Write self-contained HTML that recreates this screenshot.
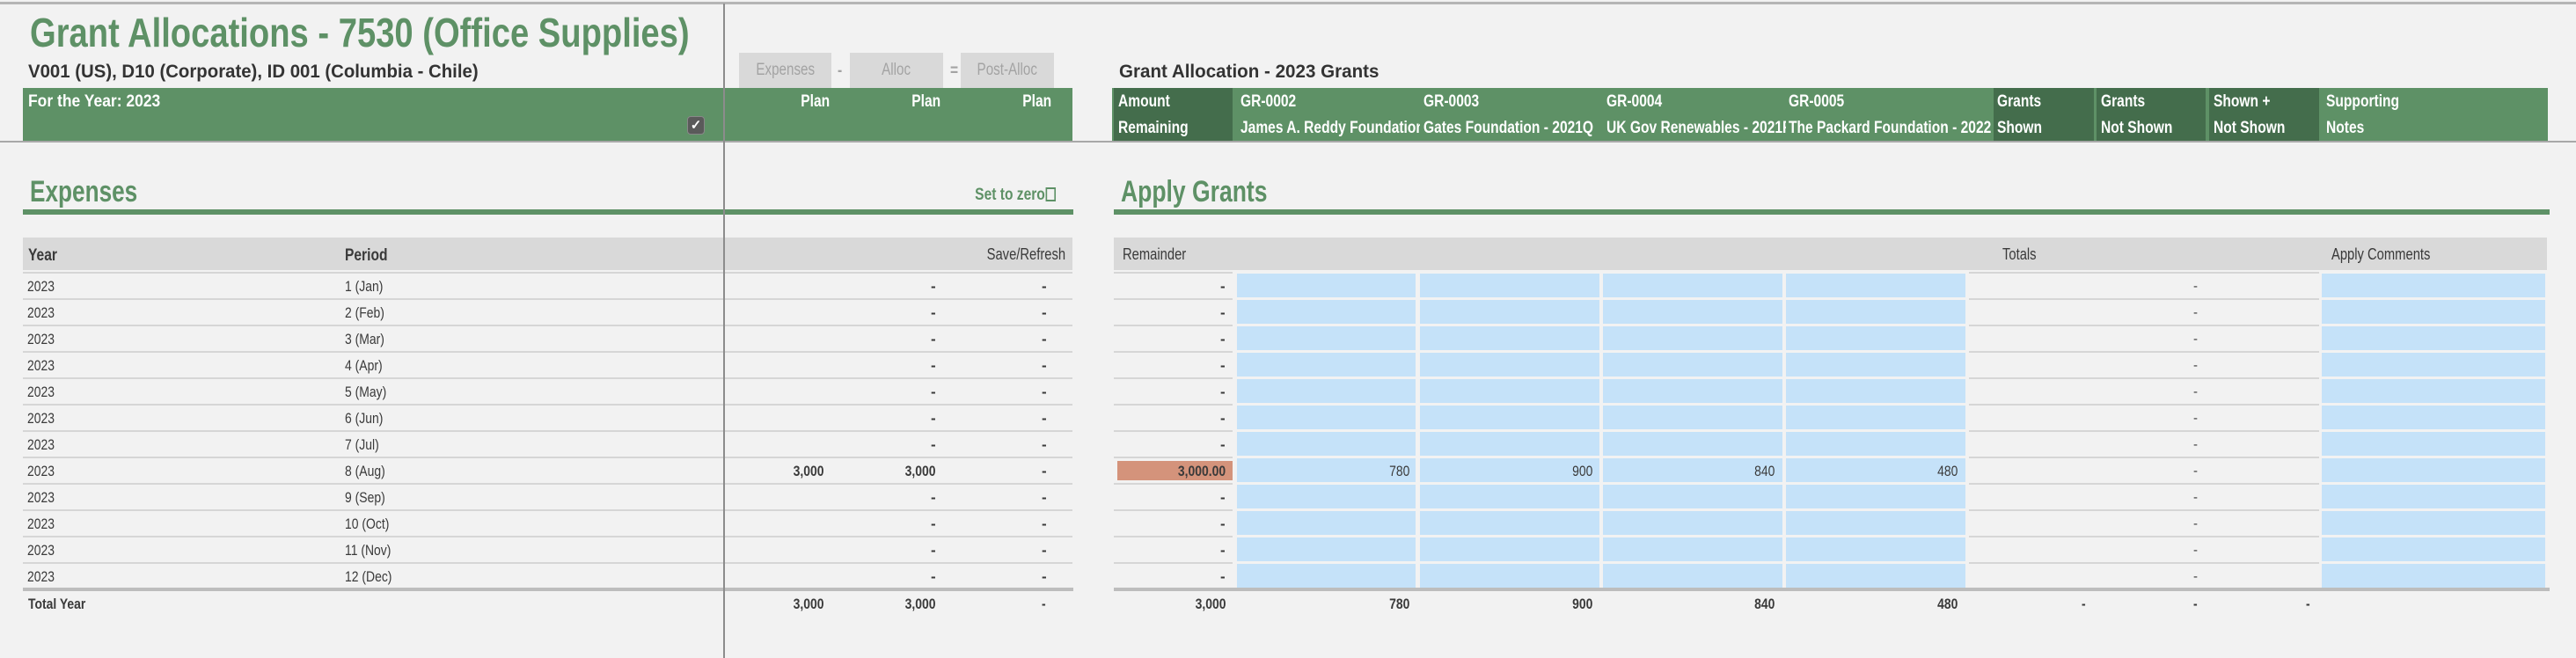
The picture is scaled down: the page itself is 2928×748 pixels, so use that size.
<!DOCTYPE html>
<html><head><meta charset="utf-8"><style>
*{margin:0;padding:0;box-sizing:border-box}
body{width:2928px;height:748px;background:#f2f2f2;position:relative;overflow:hidden;font-family:"Liberation Sans",sans-serif;color:#3a3a3a}
.a{position:absolute}
.t{position:absolute;white-space:nowrap;transform:scaleX(.82);transform-origin:left center}
.r{position:absolute;white-space:nowrap;transform:scaleX(.82);transform-origin:right center;text-align:right}
.row{position:absolute;height:30px;line-height:30px;font-size:17px}
.b{font-weight:bold}
.w{color:#fff;font-weight:bold;font-size:19px}
.sep{position:absolute;height:2px;background:#d6d6d6}
.btn{position:absolute;top:60px;height:40px;background:#d9d9d9;color:#a3a3a3;font-size:19px;line-height:40px;text-align:center}
</style></head><body>
<div class="a" style="left:0;top:2px;width:2928px;height:3px;background:#b5b5b5"></div>
<div class="a" style="left:822px;top:4px;width:2px;height:744px;background:#8c8c8c;z-index:5"></div>

<div class="t b" style="left:34px;top:10px;font-size:46px;line-height:54px;color:#5e9166;transform:scaleX(.83)">Grant Allocations - 7530 (Office Supplies)</div>
<div class="t b" style="left:32px;top:70px;font-size:21px;line-height:24px;color:#333;transform:scaleX(.97)">V001 (US), D10 (Corporate), ID 001 (Columbia - Chile)</div>
<div class="t b" style="left:1272px;top:70px;font-size:21px;line-height:24px;color:#333;transform:scaleX(.98)">Grant Allocation  - 2023 Grants</div>

<div class="btn" style="left:840px;width:105px"><span style="display:inline-block;transform:scaleX(.8)">Expenses</span></div>
<div class="btn" style="left:966px;width:106px"><span style="display:inline-block;transform:scaleX(.8)">Alloc</span></div>
<div class="btn" style="left:1092px;width:106px"><span style="display:inline-block;transform:scaleX(.8)">Post-Alloc</span></div>
<div class="t b" style="left:952px;top:70px;font-size:19px;color:#a3a3a3">-</div>
<div class="t b" style="left:1080px;top:70px;font-size:19px;color:#a3a3a3">=</div>

<div class="a" style="left:26px;top:100px;width:1193px;height:60px;background:#5e9166"></div>
<div class="t w" style="left:32px;top:104px;line-height:24px;transform:scaleX(.92)">For the Year: 2023</div>
<div class="a" style="left:781px;top:132px;width:20px;height:21px;background:#5a5a5a;border-radius:4px;border:1px solid #888;color:#fff;font-size:15px;line-height:19px;text-align:center;font-weight:bold">✓</div>
<div class="r w" style="right:1985px;top:104px;line-height:24px">Plan</div>
<div class="r w" style="right:1859px;top:104px;line-height:24px">Plan</div>
<div class="r w" style="right:1733px;top:104px;line-height:24px">Plan</div>

<div class="a" style="left:1264px;top:100px;width:1632px;height:60px;background:#5e9166"></div>
<div class="a" style="left:1266px;top:100px;width:135px;height:60px;background:#446d4c"></div>
<div class="a" style="left:2266px;top:100px;width:114px;height:60px;background:#446d4c"></div>
<div class="a" style="left:2383px;top:100px;width:124px;height:60px;background:#446d4c"></div>
<div class="a" style="left:2511px;top:100px;width:125px;height:60px;background:#446d4c"></div>
<div class="t w" style="left:1271px;top:104px;line-height:24px">Amount</div>
<div class="t w" style="left:1271px;top:134px;line-height:24px">Remaining</div>
<div class="t w" style="left:1410px;top:104px;line-height:24px">GR-0002</div>
<div class="t w" style="left:1618px;top:104px;line-height:24px">GR-0003</div>
<div class="t w" style="left:1826px;top:104px;line-height:24px">GR-0004</div>
<div class="t w" style="left:2033px;top:104px;line-height:24px">GR-0005</div>
<div class="a" style="left:1410px;top:134px;width:204px;height:24px;overflow:hidden"><div class="t w" style="left:0;top:0;line-height:24px">James A. Reddy Foundation</div></div>
<div class="a" style="left:1618px;top:134px;width:204px;height:24px;overflow:hidden"><div class="t w" style="left:0;top:0;line-height:24px">Gates Foundation - 2021Q</div></div>
<div class="a" style="left:1826px;top:134px;width:204px;height:24px;overflow:hidden"><div class="t w" style="left:0;top:0;line-height:24px">UK Gov Renewables - 2021F</div></div>
<div class="a" style="left:2033px;top:134px;width:231px;height:24px;overflow:hidden"><div class="t w" style="left:0;top:0;line-height:24px">The Packard Foundation - 2022</div></div>
<div class="t w" style="left:2270px;top:104px;line-height:24px">Grants</div>
<div class="t w" style="left:2270px;top:134px;line-height:24px">Shown</div>
<div class="t w" style="left:2388px;top:104px;line-height:24px">Grants</div>
<div class="t w" style="left:2388px;top:134px;line-height:24px">Not Shown</div>
<div class="t w" style="left:2516px;top:104px;line-height:24px">Shown +</div>
<div class="t w" style="left:2516px;top:134px;line-height:24px">Not Shown</div>
<div class="t w" style="left:2644px;top:104px;line-height:24px">Supporting</div>
<div class="t w" style="left:2644px;top:134px;line-height:24px">Notes</div>

<div class="a" style="left:0;top:160px;width:2928px;height:2px;background:#a8a8a8"></div>

<div class="t b" style="left:34px;top:198px;font-size:34px;line-height:40px;color:#5e9166;transform:scaleX(.77)">Expenses</div>
<div class="r b" style="right:1728px;top:210px;font-size:19px;line-height:24px;color:#5e9166">Set to zero<span style="display:inline-block;width:14px;height:16px;border:2px solid #5e9166;vertical-align:-2px;margin-left:1px"></span></div>
<div class="t b" style="left:1274px;top:198px;font-size:34px;line-height:40px;color:#5e9166;transform:scaleX(.78)">Apply Grants</div>
<div class="a" style="left:26px;top:238px;width:1194px;height:6px;background:#5e9166"></div>
<div class="a" style="left:1266px;top:238px;width:1632px;height:6px;background:#5e9166"></div>

<div class="a" style="left:26px;top:270px;width:1193px;height:37px;background:#d9d9d9"></div>
<div class="a" style="left:1266px;top:270px;width:1629px;height:37px;background:#d9d9d9"></div>
<div class="t b" style="left:32px;top:278px;font-size:19px;line-height:26px">Year</div>
<div class="t b" style="left:392px;top:278px;font-size:19px;line-height:26px">Period</div>
<div class="r" style="right:1717px;top:276px;font-size:18px;line-height:26px">Save/Refresh</div>
<div class="t" style="left:1276px;top:276px;font-size:18px;line-height:26px">Remainder</div>
<div class="t" style="left:2276px;top:276px;font-size:18px;line-height:26px">Totals</div>
<div class="t" style="left:2650px;top:276px;font-size:18px;line-height:26px">Apply Comments</div>

<div class="sep" style="left:26px;top:309px;width:1193px"></div><div class="sep" style="left:1266px;top:309px;width:135px"></div><div class="sep" style="left:2238px;top:309px;width:398px"></div>
<div class="sep" style="left:26px;top:339px;width:1193px"></div><div class="sep" style="left:1266px;top:339px;width:135px"></div><div class="sep" style="left:2238px;top:339px;width:398px"></div>
<div class="sep" style="left:26px;top:369px;width:1193px"></div><div class="sep" style="left:1266px;top:369px;width:135px"></div><div class="sep" style="left:2238px;top:369px;width:398px"></div>
<div class="sep" style="left:26px;top:399px;width:1193px"></div><div class="sep" style="left:1266px;top:399px;width:135px"></div><div class="sep" style="left:2238px;top:399px;width:398px"></div>
<div class="sep" style="left:26px;top:429px;width:1193px"></div><div class="sep" style="left:1266px;top:429px;width:135px"></div><div class="sep" style="left:2238px;top:429px;width:398px"></div>
<div class="sep" style="left:26px;top:459px;width:1193px"></div><div class="sep" style="left:1266px;top:459px;width:135px"></div><div class="sep" style="left:2238px;top:459px;width:398px"></div>
<div class="sep" style="left:26px;top:489px;width:1193px"></div><div class="sep" style="left:1266px;top:489px;width:135px"></div><div class="sep" style="left:2238px;top:489px;width:398px"></div>
<div class="sep" style="left:26px;top:519px;width:1193px"></div><div class="sep" style="left:1266px;top:519px;width:135px"></div><div class="sep" style="left:2238px;top:519px;width:398px"></div>
<div class="sep" style="left:26px;top:549px;width:1193px"></div><div class="sep" style="left:1266px;top:549px;width:135px"></div><div class="sep" style="left:2238px;top:549px;width:398px"></div>
<div class="sep" style="left:26px;top:579px;width:1193px"></div><div class="sep" style="left:1266px;top:579px;width:135px"></div><div class="sep" style="left:2238px;top:579px;width:398px"></div>
<div class="sep" style="left:26px;top:609px;width:1193px"></div><div class="sep" style="left:1266px;top:609px;width:135px"></div><div class="sep" style="left:2238px;top:609px;width:398px"></div>
<div class="sep" style="left:26px;top:639px;width:1193px"></div><div class="sep" style="left:1266px;top:639px;width:135px"></div><div class="sep" style="left:2238px;top:639px;width:398px"></div>
<div class="a" style="left:26px;top:668px;width:1194px;height:4px;background:#bdbdbd"></div>
<div class="a" style="left:1266px;top:668px;width:1632px;height:4px;background:#bdbdbd"></div>

<div class="a" style="left:1406px;top:311px;width:203px;height:357px;background:repeating-linear-gradient(#c5e2f9 0 27px,#f2f2f2 27px 30px)"></div>
<div class="a" style="left:1614px;top:311px;width:204px;height:357px;background:repeating-linear-gradient(#c5e2f9 0 27px,#f2f2f2 27px 30px)"></div>
<div class="a" style="left:1822px;top:311px;width:204px;height:357px;background:repeating-linear-gradient(#c5e2f9 0 27px,#f2f2f2 27px 30px)"></div>
<div class="a" style="left:2030px;top:311px;width:204px;height:357px;background:repeating-linear-gradient(#c5e2f9 0 27px,#f2f2f2 27px 30px)"></div>
<div class="a" style="left:2639px;top:311px;width:254px;height:357px;background:repeating-linear-gradient(#c5e2f9 0 27px,#f2f2f2 27px 30px)"></div>
<div class="a" style="left:1270px;top:524px;width:131px;height:22px;background:#d4937b"></div>

<div class="row t" style="left:31px;top:311px">2023</div><div class="row t" style="left:392px;top:311px">1 (Jan)</div>
<div class="row t" style="left:31px;top:341px">2023</div><div class="row t" style="left:392px;top:341px">2 (Feb)</div>
<div class="row t" style="left:31px;top:371px">2023</div><div class="row t" style="left:392px;top:371px">3 (Mar)</div>
<div class="row t" style="left:31px;top:401px">2023</div><div class="row t" style="left:392px;top:401px">4 (Apr)</div>
<div class="row t" style="left:31px;top:431px">2023</div><div class="row t" style="left:392px;top:431px">5 (May)</div>
<div class="row t" style="left:31px;top:461px">2023</div><div class="row t" style="left:392px;top:461px">6 (Jun)</div>
<div class="row t" style="left:31px;top:491px">2023</div><div class="row t" style="left:392px;top:491px">7 (Jul)</div>
<div class="row t" style="left:31px;top:521px">2023</div><div class="row t" style="left:392px;top:521px">8 (Aug)</div>
<div class="row t" style="left:31px;top:551px">2023</div><div class="row t" style="left:392px;top:551px">9 (Sep)</div>
<div class="row t" style="left:31px;top:581px">2023</div><div class="row t" style="left:392px;top:581px">10 (Oct)</div>
<div class="row t" style="left:31px;top:611px">2023</div><div class="row t" style="left:392px;top:611px">11 (Nov)</div>
<div class="row t" style="left:31px;top:641px">2023</div><div class="row t" style="left:392px;top:641px">12 (Dec)</div>

<div class="a b" style="left:1058px;top:311px;width:10px;font-size:17px;line-height:30px">-<br>-<br>-<br>-<br>-<br>-<br>-<br><br>-<br>-<br>-<br>-</div>
<div class="a b" style="left:1184px;top:311px;width:10px;font-size:17px;line-height:30px">-<br>-<br>-<br>-<br>-<br>-<br>-<br>-<br>-<br>-<br>-<br>-</div>
<div class="a b" style="left:1387px;top:311px;width:10px;font-size:17px;line-height:30px">-<br>-<br>-<br>-<br>-<br>-<br>-<br><br>-<br>-<br>-<br>-</div>
<div class="a" style="left:2493px;top:311px;width:10px;font-size:15px;line-height:30px">-<br>-<br>-<br>-<br>-<br>-<br>-<br>-<br>-<br>-<br>-<br>-</div>

<div class="row r b" style="right:1991px;top:521px">3,000</div>
<div class="row r b" style="right:1864px;top:521px">3,000</div>
<div class="row r b" style="right:1535px;top:521px">3,000.00</div>
<div class="row r" style="right:1326px;top:521px">780</div>
<div class="row r" style="right:1118px;top:521px">900</div>
<div class="row r" style="right:911px;top:521px">840</div>
<div class="row r" style="right:703px;top:521px">480</div>

<div class="row t b" style="left:32px;top:672px">Total Year</div>
<div class="row r b" style="right:1991px;top:672px">3,000</div>
<div class="row r b" style="right:1864px;top:672px">3,000</div>
<div class="row t b" style="left:1184px;top:672px">-</div>
<div class="row r b" style="right:1534px;top:672px">3,000</div>
<div class="row r b" style="right:1326px;top:672px">780</div>
<div class="row r b" style="right:1118px;top:672px">900</div>
<div class="row r b" style="right:911px;top:672px">840</div>
<div class="row r b" style="right:703px;top:672px">480</div>
<div class="row t b" style="left:2366px;top:672px">-</div>
<div class="row t b" style="left:2493px;top:672px">-</div>
<div class="row t b" style="left:2621px;top:672px">-</div>
</body></html>
